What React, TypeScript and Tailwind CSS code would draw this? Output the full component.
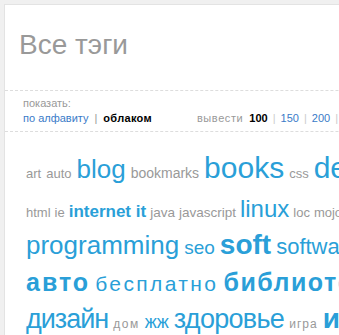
const BLUE = 'text-[#2a9fd8]'
const GRAY = 'text-[#999999]'

type Tag = { t: string; cls: string }

const ROWS: { h: string; gap: string; tags: Tag[] }[] = [
  {
    h: 'h-[44px]',
    gap: 'gap-[5px]',
    tags: [
      { t: 'art', cls: `text-[13px] ${GRAY}` },
      { t: 'auto', cls: `text-[13px] ${GRAY}` },
      { t: 'blog', cls: `text-[26px] ${BLUE}` },
      { t: 'bookmarks', cls: `text-[14px] ${GRAY}` },
      { t: 'books', cls: `text-[30px] ${BLUE}` },
      { t: 'css', cls: `text-[13px] ${GRAY}` },
      { t: 'design', cls: `text-[30px] ${BLUE}` },
      { t: 'download', cls: `text-[16px] ${BLUE}` },
    ],
  },
  {
    h: 'h-[34px]',
    gap: 'gap-[4px]',
    tags: [
      { t: 'html', cls: `text-[13px] ${GRAY}` },
      { t: 'ie', cls: `text-[13px] ${GRAY}` },
      { t: 'internet it', cls: `text-[17px] font-bold ${BLUE}` },
      { t: 'java', cls: `text-[13.5px] ${GRAY}` },
      { t: 'javascript', cls: `text-[13.5px] ${GRAY}` },
      { t: 'linux', cls: `text-[24px] ${BLUE}` },
      { t: 'loc', cls: `text-[13px] ${GRAY}` },
      { t: 'mojo', cls: `text-[13px] ${GRAY}` },
    ],
  },
  {
    h: 'h-[39px]',
    gap: 'gap-[5px]',
    tags: [
      { t: 'programming', cls: `text-[26px] ${BLUE}` },
      { t: 'seo', cls: `text-[19px] ${BLUE}` },
      { t: 'soft', cls: `text-[28px] font-bold ${BLUE}` },
      { t: 'software', cls: `text-[22px] ${BLUE}` },
    ],
  },
  {
    h: 'h-[35px]',
    gap: 'gap-[5px]',
    tags: [
      { t: 'авто', cls: `text-[25px] font-bold tracking-[2px] ${BLUE}` },
      { t: 'бесплатно', cls: `text-[21px] tracking-[2.4px] ${BLUE}` },
      { t: 'библиотека', cls: `text-[25px] font-bold tracking-[1.5px] ${BLUE}` },
    ],
  },
  {
    h: 'h-[40px]',
    gap: 'gap-[5px]',
    tags: [
      { t: 'дизайн', cls: `text-[27px] tracking-[-1px] ${BLUE}` },
      { t: 'дом', cls: `text-[12px] tracking-[1.5px] ${GRAY}` },
      { t: 'жж', cls: `text-[18px] ${BLUE}` },
      { t: 'здоровье', cls: `text-[27px] tracking-[-0.7px] ${BLUE}` },
      { t: 'игра', cls: `text-[12px] tracking-[1px] ${GRAY}` },
      { t: 'интернет', cls: `text-[28px] font-bold ${BLUE}` },
    ],
  },
]

export default function App() {
  return (
    <div className="min-h-screen bg-[#f0f0f0] pt-[4px] pl-[4px] overflow-hidden font-['Liberation_Sans',Arial,sans-serif]">
      <div className="w-[700px] bg-white border-l border-t border-[#e3e3e3] min-h-[340px]">
        {/* Title */}
        <div className="pt-[24px] pb-[29px] pl-[14px] border-b border-dashed border-[#dddddd]">
          <h1 className="text-[28px] leading-[32px] text-[#999999] font-normal">Все тэги</h1>
        </div>

        {/* View switch */}
        <div className="pt-[6px] pb-[6px] pl-[18px] border-b border-dashed border-[#dddddd] text-[11px] leading-[13px]">
          <div className="text-[#999999]">показать:</div>
          <div className="mt-[2px] flex items-baseline whitespace-nowrap">
            <span className="text-[#3a7bc8]">по алфавиту</span>
            <span className="mx-[6px] text-[#999999]">|</span>
            <span className="font-bold tracking-[0.3px] text-black">облаком</span>
            <span className="ml-[45px] tracking-[0.6px] text-[#999999]">вывести</span>
            <span className="ml-[6px] font-bold text-black">100</span>
            <span className="mx-[5px] text-[#cccccc]">|</span>
            <span className="text-[#3a7bc8]">150</span>
            <span className="mx-[5px] text-[#cccccc]">|</span>
            <span className="text-[#3a7bc8]">200</span>
            <span className="mx-[5px] text-[#cccccc]">|</span>
            <span className="text-[#3a7bc8]">все</span>
          </div>
        </div>

        {/* Cloud */}
        <div className="pt-[21px] pl-[21px]">
          {ROWS.map((row, i) => (
            <div key={i} className={`flex items-baseline whitespace-nowrap ${row.gap} ${row.h}`}>
              {row.tags.map(tag => (
                <span key={tag.t} className={`leading-none ${tag.cls}`}>{tag.t}</span>
              ))}
            </div>
          ))}
        </div>
      </div>
    </div>
  )
}
